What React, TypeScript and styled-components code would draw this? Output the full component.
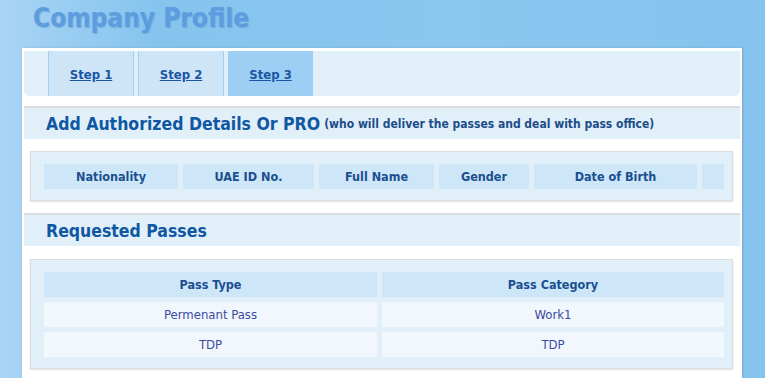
import React from "react";
import styled, { createGlobalStyle } from "styled-components";

const GlobalStyle = createGlobalStyle`
  html, body {
    margin: 0;
    padding: 0;
    height: 100%;
  }
  body {
    font-family: Tahoma, "DejaVu Sans Condensed", "DejaVu Sans", sans-serif;
    background: linear-gradient(90deg, #a9d4f5 0%, #86c4ee 20%, #8bc6ef 60%, #86c3ee 100%);
    overflow: hidden;
  }
`;

const Page = styled.div`
  width: 765px;
  height: 378px;
  overflow: hidden;
`;

const Title = styled.h1`
  margin: 0;
  height: 48px;
  padding: 3px 0 0 33px;
  box-sizing: border-box;
  font-size: 26px;
  font-weight: bold;
  color: #5b9ddf;
  text-shadow: 1px 1px 1px rgba(70, 120, 190, 0.35);
`;

const Panel = styled.div`
  margin-left: 22px;
  width: 720px;
  background: #fff;
  padding: 3px 2px 20px;
  box-sizing: border-box;
  box-shadow: 1px 0 2px rgba(120, 140, 160, 0.5);
  height: 330px;
`;

const TabBar = styled.div`
  display: flex;
  height: 45px;
  background: #e1eff9;
  border-radius: 0 0 6px 6px;
  padding-left: 24px;
  gap: 4px;
`;

const Tab = styled.a<{ $active?: boolean }>`
  display: flex;
  align-items: center;
  justify-content: center;
  box-sizing: border-box;
  width: ${(p) => (p.$active ? 85 : 86)}px;
  border-left: 1px solid #9fd0f3;
  border-right: 1px solid #9fd0f3;
  background: ${(p) => (p.$active ? "#9ccff3" : "#cde5f7")};
  color: #1a56a4;
  font-size: 13px;
  font-weight: bold;
  text-decoration: underline;
  padding-top: 2px;
`;

const SectionHeader = styled.div<{ $top: number }>`
  margin-top: ${(p) => p.$top}px;
  height: 33px;
  box-sizing: border-box;
  border-top: 2px solid #dadee2;
  background: #e1eff9;
  display: flex;
  align-items: center;
  padding-left: 22px;
  color: #0f57a3;
`;

const HeaderTitle = styled.span`
  font-size: 17.5px;
  font-weight: bold;
`;

const HeaderNote = styled.span`
  font-size: 12px;
  font-weight: bold;
  color: #1d4d88;
  margin-left: 4px;
`;

const Box = styled.div<{ $top: number }>`
  margin: ${(p) => p.$top}px 7px 0 6px;
  background: #e1eff9;
  border: 1px solid #dcdcdc;
  box-shadow: 0 1px 2px rgba(0, 0, 0, 0.12);
  padding: 12px 8px 11px 13px;
`;

const Grid = styled.div<{ $cols: string }>`
  display: grid;
  grid-template-columns: ${(p) => p.$cols};
  grid-auto-rows: 25px;
  gap: 5px;
`;

const HeadCell = styled.div`
  background: #cde6f8;
  display: flex;
  align-items: center;
  justify-content: center;
  font-size: 12.5px;
  font-weight: bold;
  color: #1b4f8f;
`;

const BodyCell = styled.div`
  background: #f1f7fc;
  display: flex;
  align-items: center;
  justify-content: center;
  font-size: 13px;
  color: #3d4aa2;
`;

const authorizedCols = ["Nationality", "UAE ID No.", "Full Name", "Gender", "Date of Birth", ""];
const passes = [
  ["Permenant Pass", "Work1"],
  ["TDP", "TDP"],
];

export default function App() {
  return (
    <Page>
      <GlobalStyle />
      <Title>Company Profile</Title>
      <Panel>
        <TabBar>
          <Tab>Step 1</Tab>
          <Tab>Step 2</Tab>
          <Tab $active>Step 3</Tab>
        </TabBar>

        <SectionHeader $top={10}>
          <HeaderTitle>Add Authorized Details Or PRO</HeaderTitle>
          <HeaderNote>(who will deliver the passes and deal with pass office)</HeaderNote>
        </SectionHeader>
        <Box $top={12}>
          <Grid $cols="134px 131px 115px 90px 163px 22px">
            {authorizedCols.map((c, i) => (
              <HeadCell key={i}>{c}</HeadCell>
            ))}
          </Grid>
        </Box>

        <SectionHeader $top={12}>
          <HeaderTitle>Requested Passes</HeaderTitle>
        </SectionHeader>
        <Box $top={13}>
          <Grid $cols="333px 342px">
            <HeadCell>Pass Type</HeadCell>
            <HeadCell>Pass Category</HeadCell>
            {passes.map((row) =>
              row.map((v, j) => <BodyCell key={v + j}>{v}</BodyCell>)
            )}
          </Grid>
        </Box>
      </Panel>
    </Page>
  );
}
